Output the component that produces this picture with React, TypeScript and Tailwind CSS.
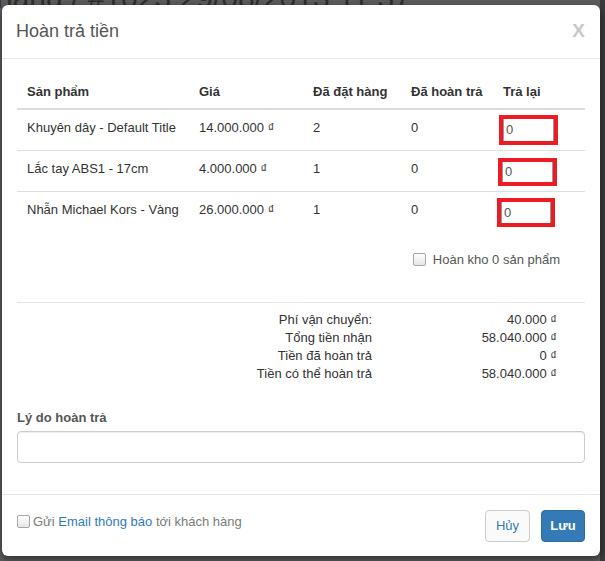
import React from "react";

type Row = {
  name: string;
  price: string;
  ordered: number;
  returned: number;
  box: string;
};

const rows: Row[] = [
  { name: "Khuyên dây - Default Title", price: "14.000.000", ordered: 2, returned: 0, box: "mt-[-3px] ml-[4px] h-[30px] w-[59px]" },
  { name: "Lắc tay ABS1 - 17cm", price: "4.000.000", ordered: 1, returned: 0, box: "mt-[-1px] ml-[3px] h-[28px] w-[59px]" },
  { name: "Nhẫn Michael Kors - Vàng", price: "26.000.000", ordered: 1, returned: 0, box: "mt-[-2px] ml-[2px] h-[29px] w-[58px]" },
];

const summary = [
  ["Phí vận chuyển:", "40.000"],
  ["Tổng tiền nhận", "58.040.000"],
  ["Tiền đã hoàn trả", "0"],
  ["Tiền có thể hoàn trả", "58.040.000"],
];

const cols = "grid grid-cols-[174px_114px_98px_92px_90px]";

function Money({ value }: { value: string }) {
  return (
    <>
      {value} <span className="text-[13px]">₫</span>
    </>
  );
}

function Checkbox() {
  return (
    <span className="inline-block h-[13px] w-[13px] rounded-[2px] border border-[#a6a6a6] bg-gradient-to-b from-white to-[#e6e6e6]" />
  );
}

export default function App() {
  return (
    <div
      className="relative h-[561px] w-[605px] overflow-hidden bg-[#5c5c5c] text-[13px] text-[#333]"
      style={{ fontFamily: '"Liberation Sans", Arial, sans-serif' }}
    >
      {/* page behind the overlay */}
      <div className="absolute left-[-4px] top-[-25px] whitespace-nowrap text-[30px] text-[#2e2e2e]">
        hang / #1023 29/08/2013 11:37
      </div>
      <div className="absolute right-0 top-0 h-full w-[5px] bg-[#3c3c3c]" />

      <div className="relative ml-[2px] mt-[5px] w-[598px] rounded-[6px] bg-white shadow-[0_3px_9px_rgba(0,0,0,0.5)]">
        {/* header */}
        <div className="flex h-[54px] items-center justify-between border-b border-[#e5e5e5] pl-[14px] pr-[15px]">
          <h4 className="text-[18px] text-[#555]">Hoàn trả tiền</h4>
          <span className="text-[19px] font-bold text-[#c8c8c8]">X</span>
        </div>

        {/* body */}
        <div className="px-[15px] pt-[15px]">
          <div className={`${cols} h-[36px] border-b-2 border-[#ddd] font-bold`}>
            <div className="py-[8px] pl-[10px]">Sản phẩm</div>
            <div className="py-[8px] pl-[8px]">Giá</div>
            <div className="py-[8px] pl-[8px]">Đã đặt hàng</div>
            <div className="py-[8px] pl-[8px]">Đã hoàn trả</div>
            <div className="py-[8px] pl-[8px]">Trả lại</div>
          </div>
          {rows.map((r, i) => (
            <div
              key={r.name}
              className={`${cols} h-[41px] ${i < rows.length - 1 ? "border-b border-[#ddd]" : ""}`}
            >
              <div className="py-[8px] pl-[10px]">{r.name}</div>
              <div className="py-[8px] pl-[8px]">
                <Money value={r.price} />
              </div>
              <div className="py-[8px] pl-[8px]">{r.ordered}</div>
              <div className="py-[8px] pl-[8px]">{r.returned}</div>
              <div className="py-[8px]">
                <div className={`${r.box} border-[4px] border-[#ed1c24] bg-white`}>
                  <div className="flex h-full items-center border-l border-r border-[#999] pl-[2px] text-[#555]">
                    0
                  </div>
                </div>
              </div>
            </div>
          ))}

          <div className="mt-[17px] flex items-center justify-end gap-[7px] pr-[25px] text-[#555]">
            <Checkbox />
            <span>Hoàn kho 0 sản phẩm</span>
          </div>

          <div className="mt-[32px] border-t border-[#e5e5e5] pt-[7px]">
            {summary.map(([label, value]) => (
              <div key={label} className="grid h-[18px] grid-cols-[355px_185px] items-center">
                <div className="text-right">{label}</div>
                <div className="text-right">
                  <Money value={value} />
                </div>
              </div>
            ))}
          </div>

          <div className="mt-[26px] font-bold text-[#555]">Lý do hoàn trả</div>
          <div className="mt-[4px] h-[32px] rounded-[4px] border border-[#ccc] shadow-[inset_0_1px_1px_rgba(0,0,0,0.075)]" />
          <div className="h-[31px]" />
        </div>

        {/* footer */}
        <div className="flex items-start justify-between border-t border-[#e5e5e5] px-[15px] pb-[14px] pt-[15px]">
          <div className="mt-[2px] flex items-center gap-[3px] text-[#7a7a7a]">
            <Checkbox />
            <span>
              Gửi <span className="text-[#337ab7]">Email thông báo</span> tới khách hàng
            </span>
          </div>
          <div className="flex gap-[11px]">
            <button className="h-[32px] w-[45px] rounded-[4px] border border-[#ccc] bg-[#fafafa] text-[#337ab7]">
              Hủy
            </button>
            <button className="h-[32px] w-[44px] rounded-[4px] border border-[#2e6da4] bg-[#337ab7] font-bold text-white">
              Lưu
            </button>
          </div>
        </div>
      </div>
    </div>
  );
}
